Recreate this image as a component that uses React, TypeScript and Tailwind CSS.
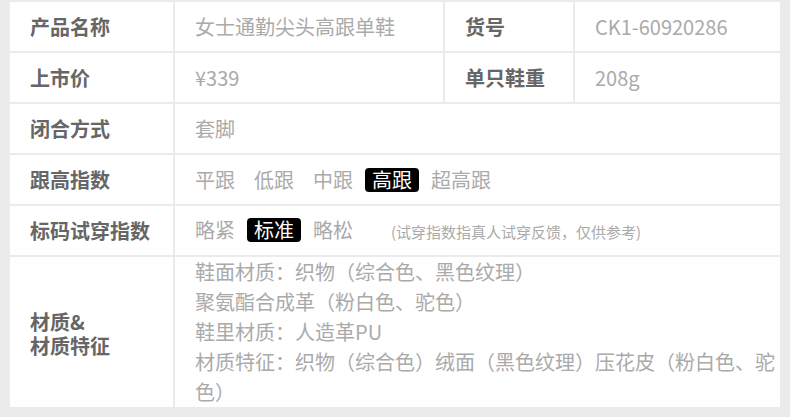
const font = { fontFamily: '"Noto Sans CJK SC", "Noto Sans", sans-serif' };

const Label = ({ children }: { children: React.ReactNode }) => (
  <div className="bg-white flex items-center pl-[20px] text-[20px] font-bold text-[#666666]">
    {children}
  </div>
);

const Value = ({ children }: { children: React.ReactNode }) => (
  <div className="bg-white flex items-center pl-[20px] text-[20px] text-[#aaaaaa]">
    {children}
  </div>
);

const Option = ({ text, active }: { text: string; active?: boolean }) => (
  <span
    className={
      active
        ? "px-[7px] leading-[24px] rounded-[4px] bg-black text-white"
        : "px-[7px] leading-[24px]"
    }
  >
    {text}
  </span>
);

export default function App() {
  return (
    <div className="w-[790px] h-[417px] bg-[#ebebeb] pl-[10px] pr-[10px] pt-[2px] pb-[10px]" style={font}>
      <div className="grid grid-cols-[163px_268px_128px_205px] grid-rows-[49px_49px_49px_49px_49px_150px] gap-[2px]">
        <Label>产品名称</Label>
        <Value>女士通勤尖头高跟单鞋</Value>
        <Label>货号</Label>
        <Value>CK1-60920286</Value>

        <Label>上市价</Label>
        <Value>¥339</Value>
        <Label>单只鞋重</Label>
        <Value>208g</Value>

        <Label>闭合方式</Label>
        <div className="col-span-3 bg-white flex items-center pl-[20px] text-[20px] text-[#aaaaaa]">套脚</div>

        <Label>跟高指数</Label>
        <div className="col-span-3 bg-white flex items-center gap-[5px] pl-[13px] text-[20px] text-[#aaaaaa]">
          <Option text="平跟" />
          <Option text="低跟" />
          <Option text="中跟" />
          <Option text="高跟" active />
          <Option text="超高跟" />
        </div>

        <Label>标码试穿指数</Label>
        <div className="col-span-3 bg-white flex items-baseline pt-[12px] gap-[5px] pl-[13px] text-[20px] text-[#aaaaaa]">
          <Option text="略紧" />
          <Option text="标准" active />
          <Option text="略松" />
          <span className="ml-[26px] text-[15px]">(试穿指数指真人试穿反馈，仅供参考)</span>
        </div>

        <Label>
          <div className="flex flex-col pt-[4px]">
            <span className="leading-[24px]">材质&</span>
            <span className="leading-[24px]">材质特征</span>
          </div>
        </Label>
        <div className="col-span-3 bg-white pl-[20px] pr-[4px] text-[20px] leading-[30px] text-[#aaaaaa]">
          <div>鞋面材质：织物（综合色、黑色纹理）</div>
          <div>聚氨酯合成革（粉白色、驼色）</div>
          <div>鞋里材质：人造革PU</div>
          <div>材质特征：织物（综合色）绒面（黑色纹理）压花皮（粉白色、驼色）</div>
        </div>
      </div>
    </div>
  );
}
